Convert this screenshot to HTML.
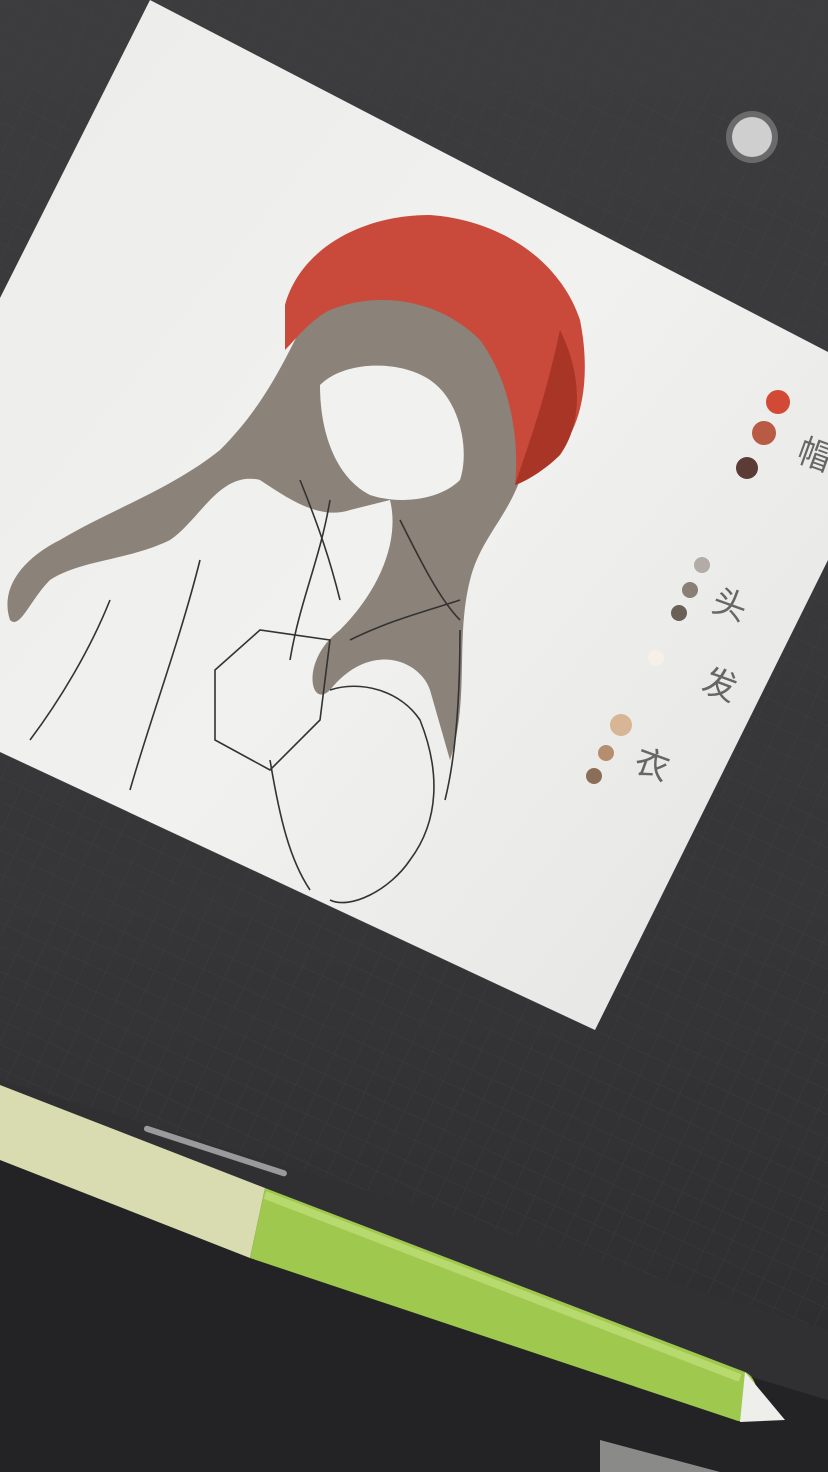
<!DOCTYPE html>
<html><head><meta charset="utf-8"><style>
html,body{margin:0;padding:0;background:#1a1a1a;}
svg{display:block}
</style></head><body>
<svg width="828" height="1472" viewBox="0 0 828 1472" xmlns="http://www.w3.org/2000/svg">
<defs>
<linearGradient id="bg" x1="0" y1="0" x2="0" y2="1">
<stop offset="0" stop-color="#3c3c3e"/><stop offset="0.6" stop-color="#363638"/><stop offset="1" stop-color="#2c2c2e"/>
</linearGradient>
<pattern id="grid" width="22" height="22" patternUnits="userSpaceOnUse" patternTransform="rotate(25)">
<path d="M22 0H0V22" fill="none" stroke="#454547" stroke-width="1"/>
</pattern>
<linearGradient id="paper" x1="0" y1="0" x2="1" y2="1">
<stop offset="0" stop-color="#ececea"/><stop offset="0.5" stop-color="#f1f1ef"/><stop offset="1" stop-color="#e4e4e2"/>
</linearGradient>
</defs>
<rect width="828" height="1472" fill="url(#bg)"/>
<rect width="828" height="1472" fill="url(#grid)" opacity="0.5"/>
<path d="M0 1150 L828 1400 L828 1472 L0 1472Z" fill="#232325"/>
<path d="M0 1080 L828 1330 L828 1400 L0 1150Z" fill="#303032"/>
<circle cx="752" cy="137" r="26" fill="#6a6a6a"/>
<circle cx="752" cy="137" r="20" fill="#cfcfcf"/>
<path d="M150 0 L828 352 L828 560 L595 1030 L0 752 L0 298Z" fill="url(#paper)"/>
<path d="M300 330 C340 280 440 270 510 320 C540 360 540 430 520 480 C505 520 480 540 470 580 C455 640 470 700 450 760 L430 690 C420 660 370 640 330 690 C310 710 300 660 340 630 C380 590 400 540 390 500 L350 510 C320 520 290 500 260 480 C220 470 200 520 170 540 C130 560 80 560 50 580 C30 600 20 630 10 620 C0 590 20 560 60 540 C110 510 170 490 220 450 C260 410 280 370 300 330Z" fill="#8b8279"/>
<path d="M320 385 C345 360 400 360 430 380 C460 400 470 450 460 480 C440 500 400 505 370 495 C340 480 320 440 320 385Z" fill="#f1f1ef"/>
<path d="M285 305 C300 250 360 215 430 215 C500 220 560 260 580 320 C590 370 585 420 560 450 C545 470 525 480 515 485 C520 440 510 380 480 340 C440 300 380 290 330 310 C310 320 295 340 285 350Z" fill="#c9493a"/>
<path d="M560 330 C580 370 585 420 560 455 C545 470 525 482 515 485 C530 440 545 400 560 330Z" fill="#a83526"/>
<g fill="none" stroke="#333" stroke-width="1.6">
<path d="M330 500 C320 560 300 600 290 660 M400 520 C420 560 440 600 460 620"/>
<path d="M215 670 L260 630 L330 640 L320 720 L270 770 L215 740Z"/>
<path d="M330 690 C360 680 400 690 420 720 C440 770 440 820 410 860 C390 890 350 910 330 900"/>
<path d="M110 600 C90 650 60 700 30 740 M200 560 C180 640 150 720 130 790 M270 760 C280 820 290 860 310 890"/>
<path d="M350 640 C390 620 430 610 460 600 M460 630 C460 700 455 760 445 800"/>
<path d="M300 480 C320 530 330 560 340 600"/>
</g>
<circle cx="778" cy="402" r="12" fill="#d24a36"/>
<circle cx="764" cy="433" r="12" fill="#b95a44"/>
<circle cx="747" cy="468" r="11" fill="#5a3b36"/>
<circle cx="702" cy="565" r="8" fill="#b3aca6"/>
<circle cx="690" cy="590" r="8" fill="#8a7f77"/>
<circle cx="679" cy="613" r="8" fill="#6b6058"/>
<circle cx="656" cy="658" r="8" fill="#f6f1e6"/>
<circle cx="621" cy="725" r="11" fill="#d8b595"/>
<circle cx="606" cy="753" r="8" fill="#b48e6e"/>
<circle cx="594" cy="776" r="8" fill="#8a6e58"/>
<g font-family="'Liberation Sans','Noto Sans CJK SC',sans-serif" fill="#666" font-size="34">
<text x="795" y="460" transform="rotate(20 795 460)">帽</text>
<text x="710" y="610" transform="rotate(20 710 610)">头</text>
<text x="700" y="690" transform="rotate(20 700 690)">发</text>
<text x="632" y="770" transform="rotate(20 632 770)">衣</text>
</g>
<path d="M0 1085 L265 1188 L250 1258 L0 1160Z" fill="#d8dcb0"/>
<path d="M265 1188 L745 1372 C765 1380 760 1430 735 1420 L250 1258Z" fill="#9fc84e"/>
<path d="M265 1195 L740 1378" stroke="#c2e07a" stroke-width="8" fill="none" opacity="0.7"/>
<path d="M745 1372 L785 1420 L740 1422Z" fill="#eeeeea"/>
<path d="M600 1440 L720 1472 L600 1472Z" fill="#cfcfcb" opacity="0.6"/>
<rect x="145" y="1125" width="150" height="6" rx="3" fill="#9a9a9c" transform="rotate(18 145 1125)"/>
</svg>
</body></html>
